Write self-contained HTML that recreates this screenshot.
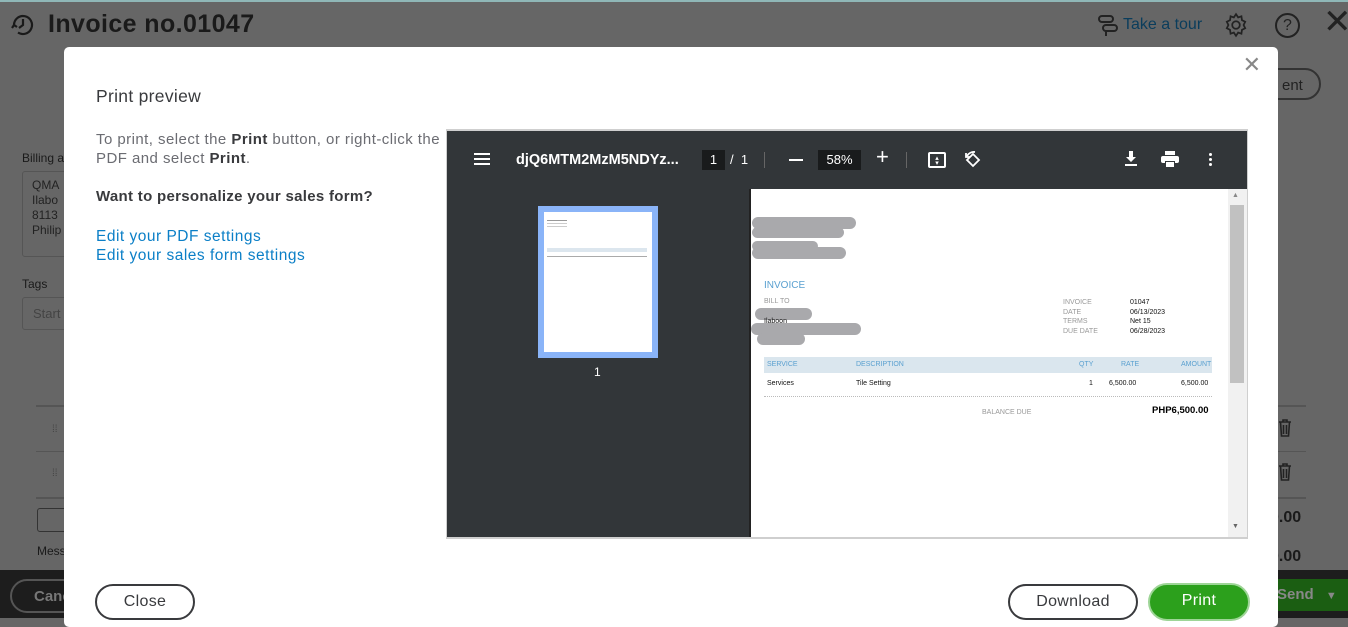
<!DOCTYPE html>
<html><head><meta charset="utf-8"><style>
*{box-sizing:border-box;margin:0;padding:0}
body{width:1348px;height:618px;overflow:hidden;background:#666;font-family:"Liberation Sans",sans-serif;position:relative}
.abs{position:absolute}
.bg-t{color:#1a1a1a}
.modal{position:absolute;left:64px;top:47px;width:1214px;height:580px;background:#fff;border-radius:5px}
a{color:#0b7fc7;text-decoration:none}
.tb{position:absolute;left:447px;top:131px;width:800px;height:58px;background:#323639;color:#fff}
.pill{position:absolute;border:2px solid #393a3d;border-radius:20px;background:#fff;font-size:16px;color:#393a3d;text-align:center;line-height:32px;letter-spacing:.3px}
.g{color:#999;font-size:7px}
.k{color:#111;font-size:7px}
.blob{position:absolute;background:#a9a9ac;border-radius:9px}
</style></head><body>
<div class="abs" style="left:0;top:0;width:1348px;height:2px;background:#8fb7b7"></div>
<svg class="abs" style="left:10px;top:12px" width="26" height="26" viewBox="0 0 26 26" fill="none" stroke="#1a1a1a" stroke-width="2.2"><path d="M4 13a9 9 0 1 1 4 7.5"/><path d="M13 7v6l-4 3"/><path d="M2 16l2 -3 3 2"/></svg>
<div class="abs bg-t" style="left:48px;top:10px;font-size:25px;font-weight:bold;letter-spacing:.4px">Invoice no.01047</div>
<svg class="abs" style="left:1096px;top:13px" width="24" height="24" viewBox="0 0 24 24" fill="none" stroke="#222" stroke-width="2"><rect x="3" y="3" width="14" height="6" rx="3"/><rect x="7" y="12" width="14" height="6" rx="3"/><path d="M10 18v5"/></svg>
<div class="abs" style="left:1123px;top:16px;font-size:16px;color:#0a3d5c">Take a tour</div>
<svg class="abs" style="left:1223px;top:12px" width="26" height="26" viewBox="0 0 24 24" fill="none" stroke="#222" stroke-width="1.6"><circle cx="12" cy="12" r="3.5"/><path d="M12 2l2 3 3-1 .5 3.5 3 1.5-1.5 3 1.5 3-3 1.5-.5 3.5-3-1-2 3-2-3-3 1-.5-3.5-3-1.5 1.5-3-1.5-3 3-1.5.5-3.5 3 1z"/></svg>
<div class="abs" style="left:1275px;top:13px;width:25px;height:25px;border:2px solid #222;border-radius:50%;font-size:16px;text-align:center;line-height:21px;color:#222">?</div>
<div class="abs" style="left:1323px;top:2px;font-size:34px;color:#222">✕</div>
<div class="abs" style="left:1250px;top:68px;width:71px;height:32px;border:2px solid #333;border-radius:18px;font-size:15px;padding:7px 0 0 30px;color:#222">ent</div>
<div class="abs bg-t" style="left:22px;top:151px;font-size:12px">Billing a</div>
<div class="abs" style="left:22px;top:171px;width:60px;height:86px;border:1px solid #555;border-radius:3px;font-size:12px;color:#222;padding:6px 9px;line-height:15px">QMA<br>Ilabo<br>8113<br>Philip</div>
<div class="abs bg-t" style="left:22px;top:277px;font-size:12px">Tags</div>
<div class="abs" style="left:22px;top:297px;width:60px;height:33px;border:1px solid #555;border-radius:3px;font-size:13px;color:#444;padding:8px 10px">Start</div>
<div class="abs" style="left:36px;top:405px;width:1270px;height:2px;background:#555"></div>
<div class="abs" style="left:36px;top:451px;width:1270px;height:1px;background:#555"></div>
<div class="abs" style="left:36px;top:497px;width:1270px;height:2px;background:#555"></div>
<div class="abs" style="left:52px;top:424px;color:#444;font-size:10px">⁞⁞</div>
<div class="abs" style="left:52px;top:468px;color:#444;font-size:10px">⁞⁞</div>
<svg class="abs" style="left:1278px;top:419px" width="14" height="18" viewBox="0 0 14 18" fill="none" stroke="#222" stroke-width="1.6"><path d="M1 3h12M5 3V1h4v2M2.5 3l1 14h7l1-14M5.5 6v9M8.5 6v9"/></svg>
<svg class="abs" style="left:1278px;top:463px" width="14" height="18" viewBox="0 0 14 18" fill="none" stroke="#222" stroke-width="1.6"><path d="M1 3h12M5 3V1h4v2M2.5 3l1 14h7l1-14M5.5 6v9M8.5 6v9"/></svg>
<div class="abs" style="left:37px;top:508px;width:40px;height:24px;border:1px solid #333;border-radius:3px"></div>
<div class="abs bg-t" style="left:37px;top:544px;font-size:12px">Mess</div>
<div class="abs bg-t" style="left:1270px;top:509px;font-size:16px;font-weight:bold">0.00</div>
<div class="abs bg-t" style="left:1270px;top:548px;font-size:16px;font-weight:bold">0.00</div>
<div class="abs" style="left:0;top:570px;width:1348px;height:48px;background:#1d1d1d"></div>
<div class="abs" style="left:10px;top:579px;width:70px;height:34px;border:2px solid #555;border-radius:18px;color:#777;font-size:15px;font-weight:bold;padding:7px 0 0 22px">Canc</div>
<div class="abs" style="left:1250px;top:579px;width:98px;height:32px;background:#1b5e12;border-radius:16px 0 0 16px;color:#888;font-size:15px;font-weight:bold;padding:7px 0 0 27px">Send <span style="font-size:11px;margin-left:8px">▼</span></div>
<div class="modal">
<div class="abs" style="right:17px;top:5px;font-size:22px;color:#888">✕</div>
<div class="abs" style="left:32px;top:39px;font-size:17.5px;color:#393a3d;letter-spacing:.3px">Print preview</div>
<div class="abs" style="left:32px;top:83px;font-size:15px;color:#6b6c72;line-height:19px;width:380px;white-space:nowrap;letter-spacing:.45px;overflow:hidden">To print, select the <b style="color:#393a3d">Print</b> button, or right-click the<br>PDF and select <b style="color:#393a3d">Print</b>.</div>
<div class="abs" style="left:32px;top:141px;font-size:15px;font-weight:bold;color:#393a3d;letter-spacing:.3px">Want to personalize your sales form?</div>
<div class="abs" style="left:32px;top:180px;font-size:15.5px;line-height:19px;letter-spacing:.5px"><a>Edit your PDF settings</a><br><a>Edit your sales form settings</a></div>
<div class="pill" style="left:31px;top:537px;width:100px;height:36px">Close</div>
<div class="pill" style="left:944px;top:537px;width:130px;height:36px">Download</div>
<div class="pill" style="left:1084px;top:536px;width:102px;height:38px;background:#2ca01c;border-color:#9ed597;color:#fff">Print</div>
</div>
<div class="abs" style="left:446px;top:129px;width:802px;height:410px;background:#cfcfcf"></div>
<div class="abs" style="left:447px;top:189px;width:302px;height:348px;background:#323639"></div>
<div class="abs" style="left:749px;top:189px;width:2px;height:348px;background:#222"></div>
<div class="abs" style="left:751px;top:189px;width:477px;height:348px;background:#fff"></div>
<div class="abs" style="left:1228px;top:189px;width:19px;height:348px;background:#f1f1f1"></div>
<div class="abs" style="left:1230px;top:205px;width:14px;height:178px;background:#c1c1c1"></div>
<div class="abs" style="left:1232px;top:192px;font-size:7px;color:#888">▲</div>
<div class="abs" style="left:1232px;top:523px;font-size:7px;color:#666">▼</div>
<div class="tb">
<div class="abs" style="left:27px;top:22px;width:16px;height:2px;background:#fff;box-shadow:0 5px #fff,0 10px #fff"></div>
<div class="abs" style="left:69px;top:21px;font-size:14.5px;font-weight:bold">djQ6MTM2MzM5NDYz...</div>
<div class="abs" style="left:255px;top:19px;width:23px;height:20px;background:#191b1c;font-size:13px;text-align:center;line-height:20px">1</div>
<div class="abs" style="left:283px;top:21px;font-size:13px">/ &nbsp;1</div>
<div class="abs" style="left:317px;top:21px;width:1px;height:16px;background:#666"></div>
<div class="abs" style="left:342px;top:28px;width:14px;height:2px;background:#fff"></div>
<div class="abs" style="left:371px;top:19px;width:43px;height:20px;background:#191b1c;font-size:13px;text-align:center;line-height:20px">58%</div>
<div class="abs" style="left:429px;top:13px;font-size:22px;font-weight:300">+</div>
<div class="abs" style="left:459px;top:21px;width:1px;height:16px;background:#666"></div>
<div class="abs" style="left:481px;top:21px;width:18px;height:16px;border:2px solid #fff;border-radius:2px;font-size:7px;text-align:center;line-height:5px;padding-top:2px">▴<br>▾</div>
<svg class="abs" style="left:516px;top:19px" width="20" height="20" viewBox="0 0 20 20" fill="none" stroke="#fff" stroke-width="1.8"><path d="M10 4l6 6-6 6-6-6z"/><path d="M4 6a8 8 0 0 1 8-4"/><path d="M3 3v4h4"/></svg>
<svg class="abs" style="left:677px;top:20px" width="14" height="16" viewBox="0 0 14 16" fill="#fff"><path d="M5 0h4v6h3l-5 5-5-5h3z"/><rect x="1" y="13" width="12" height="2"/></svg>
<svg class="abs" style="left:714px;top:20px" width="18" height="16" viewBox="0 0 18 16" fill="#fff"><rect x="4" y="0" width="10" height="4"/><rect x="0" y="5" width="18" height="7" rx="2"/><rect x="4" y="10" width="10" height="6" fill="#323639"/><rect x="5" y="11" width="8" height="5"/></svg>
<div class="abs" style="left:762px;top:22px;width:3px;height:3px;background:#fff;border-radius:50%;box-shadow:0 5px #fff,0 10px #fff"></div>
</div>
<div class="abs" style="left:538px;top:206px;width:120px;height:152px;background:#8ab4f8"></div>
<div class="abs" style="left:544px;top:212px;width:108px;height:140px;background:#fff"></div>
<div class="abs" style="left:547px;top:220px;width:20px;height:1px;background:#999;box-shadow:0 3px #ccc,0 6px #ccc"></div>
<div class="abs" style="left:547px;top:248px;width:100px;height:4px;background:#dce6ee"></div>
<div class="abs" style="left:547px;top:256px;width:100px;height:1px;background:#aaa"></div>
<div class="abs" style="left:594px;top:365px;color:#fff;font-size:12px">1</div>
<div class="blob" style="left:752px;top:217px;width:104px;height:12px"></div>
<div class="blob" style="left:752px;top:227px;width:92px;height:11px"></div>
<div class="blob" style="left:752px;top:241px;width:66px;height:10px"></div>
<div class="blob" style="left:752px;top:247px;width:94px;height:12px"></div>
<div class="abs" style="left:764px;top:280px;font-size:10px;color:#5aa0d0">INVOICE</div>
<div class="abs g" style="left:764px;top:298px">BILL TO</div>
<div class="blob" style="left:755px;top:308px;width:57px;height:12px"></div>
<div class="abs k" style="left:764px;top:318px">Ilaboon</div>
<div class="blob" style="left:751px;top:323px;width:110px;height:12px"></div>
<div class="blob" style="left:757px;top:333px;width:48px;height:12px"></div>
<div class="abs g" style="left:1063px;top:298px;line-height:9.7px">INVOICE<br>DATE<br>TERMS<br>DUE DATE</div>
<div class="abs k" style="left:1130px;top:298px;line-height:9.7px">01047<br>06/13/2023<br>Net 15<br>06/28/2023</div>
<div class="abs" style="left:764px;top:357px;width:448px;height:16px;background:#dae6ee"></div>
<div class="abs" style="left:767px;top:361px;font-size:7px;color:#5aa0d0">SERVICE</div>
<div class="abs" style="left:856px;top:361px;font-size:7px;color:#5aa0d0">DESCRIPTION</div>
<div class="abs" style="left:1079px;top:361px;font-size:7px;color:#5aa0d0">QTY</div>
<div class="abs" style="left:1121px;top:361px;font-size:7px;color:#5aa0d0">RATE</div>
<div class="abs" style="left:1181px;top:361px;font-size:7px;color:#5aa0d0">AMOUNT</div>
<div class="abs k" style="left:767px;top:380px">Services</div>
<div class="abs k" style="left:856px;top:380px">Tile Setting</div>
<div class="abs k" style="left:1089px;top:380px">1</div>
<div class="abs k" style="left:1109px;top:380px">6,500.00</div>
<div class="abs k" style="left:1181px;top:380px">6,500.00</div>
<div class="abs" style="left:764px;top:396px;width:448px;border-top:1px dotted #bbb"></div>
<div class="abs g" style="left:982px;top:409px">BALANCE DUE</div>
<div class="abs" style="left:1152px;top:405px;font-size:9.5px;font-weight:bold;color:#000">PHP6,500.00</div>
</body></html>
